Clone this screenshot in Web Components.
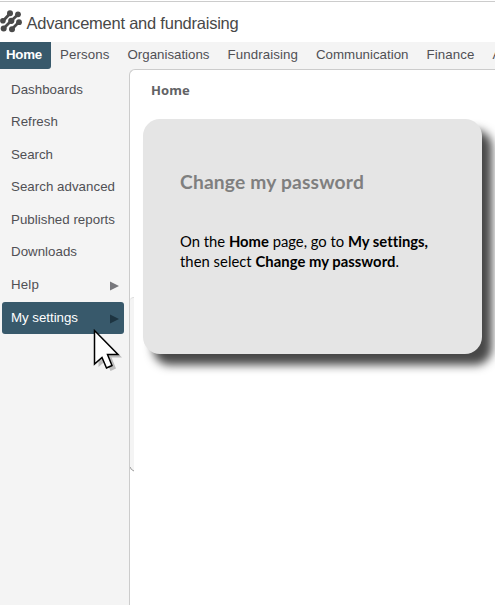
<!DOCTYPE html>
<html lang="en"><head><meta charset="utf-8"><title>Advancement and fundraising</title>
<style>html,body{margin:0;height:605px;overflow:hidden;background:#fff}</style></head>
<body><app-shell></app-shell>
<script>
function define(name, html, ready) {
  const t = document.createElement('template');
  t.innerHTML = html;
  customElements.define(name, class extends HTMLElement {
    connectedCallback() {
      if (this.shadowRoot) return;
      this.attachShadow({mode: 'open'}).append(t.content.cloneNode(true));
      if (ready) ready(this);
    }
  });
}
// Text run whose letter spacing is tuned to a given width.
define('fit-text', `<style>:host{display:inline-block;white-space:pre}</style><slot></slot>`, el => {
  const w = +el.getAttribute('w');
  const d = w - el.getBoundingClientRect().width;
  el.style.letterSpacing = d / el.textContent.length + 'px';
});
define('app-logo', `<style>:host{display:block;width:22px;height:23px}svg{display:block}</style>
<svg width="22" height="23" viewBox="0 0 22 23" fill="#4a4a4a" stroke="#4a4a4a">
<g stroke-width="2.800" fill="none"><path d="M3 11L10 3.500M3.500 18.500L11.500 10.500L18 4.500M12 19L18.500 12.500"/></g>
<g stroke="none"><circle cx="10" cy="3.300" r="3"/><circle cx="18" cy="4.300" r="2.900"/><circle cx="2.900" cy="10.800" r="2.800"/><circle cx="11.300" cy="10.800" r="3.100"/><circle cx="19" cy="12.200" r="2.900"/><circle cx="3.700" cy="18.600" r="3"/><circle cx="12" cy="19.300" r="3"/></g></svg>`);
define('app-header', `<style>:host{display:flex;box-sizing:border-box;height:42px;border-top:1px solid #fff;font-size:16.500px;color:#484848}
div{flex:1;display:flex;border-top:1px solid #ccc}app-logo{margin-top:8px}fit-text{margin:11px 0 0 4.500px;line-height:20px}</style>
<div><app-logo></app-logo><fit-text w="212">Advancement and fundraising</fit-text></div>`);
define('nav-tab', `<style>:host{display:block;flex:none;box-sizing:border-box;height:27px;line-height:26px;white-space:nowrap}
:host([active]){background:#38596b;color:#fff;font-weight:bold;border-radius:0 0 3px 0}</style><slot></slot>`);
define('nav-bar', `<style>:host{display:flex;height:27px;background:#f4f4f4;overflow:hidden;font-size:13.300px;color:#505054}
nav-tab{margin-right:18px}nav-tab[active]{width:51px;padding-left:6px;margin-right:9px}</style>
<nav-tab active><fit-text w="36">Home</fit-text></nav-tab><nav-tab><fit-text w="49.500">Persons</fit-text></nav-tab><nav-tab><fit-text w="82">Organisations</fit-text></nav-tab><nav-tab><fit-text w="70.500">Fundraising</fit-text></nav-tab><nav-tab><fit-text w="92.500">Communication</fit-text></nav-tab><nav-tab><fit-text w="48">Finance</fit-text></nav-tab><nav-tab>A</nav-tab>`);
define('menu-item', `<style>:host{display:flex;align-items:center;box-sizing:border-box;height:32.500px;margin:0 5px 0 2px;padding:0 5px 0 9px;border-radius:3px;justify-content:space-between}
svg{display:none}:host([sub]) svg{display:block;margin-top:3px}:host([active]){background:#38596b;color:#fff;height:32px;margin-top:1px}:host([active]) svg{fill:#1d3441}</style>
<slot></slot><svg width="9" height="10" fill="#77777c"><path d="M0 .5L9 5L0 9.500z"/></svg>`);
define('side-menu', `<style>:host{display:block;box-sizing:border-box;width:129px;flex:none;padding-top:4px;font-size:13.300px;color:#505054}</style>
<menu-item><fit-text w="72">Dashboards</fit-text></menu-item><menu-item><fit-text w="47">Refresh</fit-text></menu-item><menu-item><fit-text w="42">Search</fit-text></menu-item><menu-item><fit-text w="104">Search advanced</fit-text></menu-item><menu-item><fit-text w="104">Published reports</fit-text></menu-item><menu-item><fit-text w="66">Downloads</fit-text></menu-item><menu-item sub><fit-text w="28">Help</fit-text></menu-item><menu-item sub active><fit-text w="67">My settings</fit-text></menu-item>`);
define('info-card', `<style>:host{display:block;box-sizing:border-box;width:338.500px;height:235px;padding:50px 0 0 37px;background:#e5e5e5;border-radius:17px;box-shadow:10px 11px 10px 0 #484848;font:14.800px/20px Lato,"Noto Sans",sans-serif;color:#000}
h2{margin:0 0 36px;font-size:19.200px;line-height:26px;color:#7f7f7f}.l{height:20px}</style>
<h2><fit-text w="184">Change my password</fit-text></h2>
<div class="l"><fit-text w="247.500">On the <b>Home</b> page, go to <b>My settings,</b></fit-text></div>
<div class="l"><fit-text w="219">then select <b>Change my password</b>.</fit-text></div>`);
define('main-panel', `<style>:host{display:block;flex:1;box-sizing:border-box;background:#fff;border:solid #ccc;border-width:1px 0 0 1px;border-radius:6px 0 0 0;overflow:hidden;position:relative}
h1{margin:12px 0 21px 21px;font:bold 13px/16px "Noto Sans",sans-serif;color:#626265}info-card{margin-left:13px}
.edge{position:absolute;left:0;top:227px;width:4px;height:173px;background:#f4f4f4;border-top:1px solid #ddd;border-top-left-radius:4px;box-sizing:border-box}
.tick{position:absolute;left:0;top:397px}</style>
<h1><fit-text w="39">Home</fit-text></h1><info-card></info-card><div class="edge"></div><svg class="tick" width="5" height="5"><path d="M0 0Q1 3 4 4" fill="none" stroke="#999"/></svg>`);
define('mouse-pointer', `<style>:host{display:block;position:absolute;left:92px;top:328px}svg{display:block}</style>
<svg width="36" height="46"><path transform="translate(4 3)" d="M2.500 2.500V36L10 29.500L14.500 40L20 37.500L15.500 26.500H26z" fill="#777" opacity=".45"/><path d="M2.500 2.500V36L10 29.500L14.500 40L20 37.500L15.500 26.500H26z" fill="#fff" stroke="#000" stroke-width="1.500"/></svg>`);
define('app-shell', `<style>:host{display:flex;flex-direction:column;height:605px;position:relative;background:#fff;font-family:"Liberation Sans",Arial,sans-serif}
main{flex:1;display:flex;background:#f4f4f4}</style>
<app-header></app-header><nav-bar></nav-bar><main><side-menu></side-menu><main-panel></main-panel></main><mouse-pointer></mouse-pointer>`);
</script></body></html>
